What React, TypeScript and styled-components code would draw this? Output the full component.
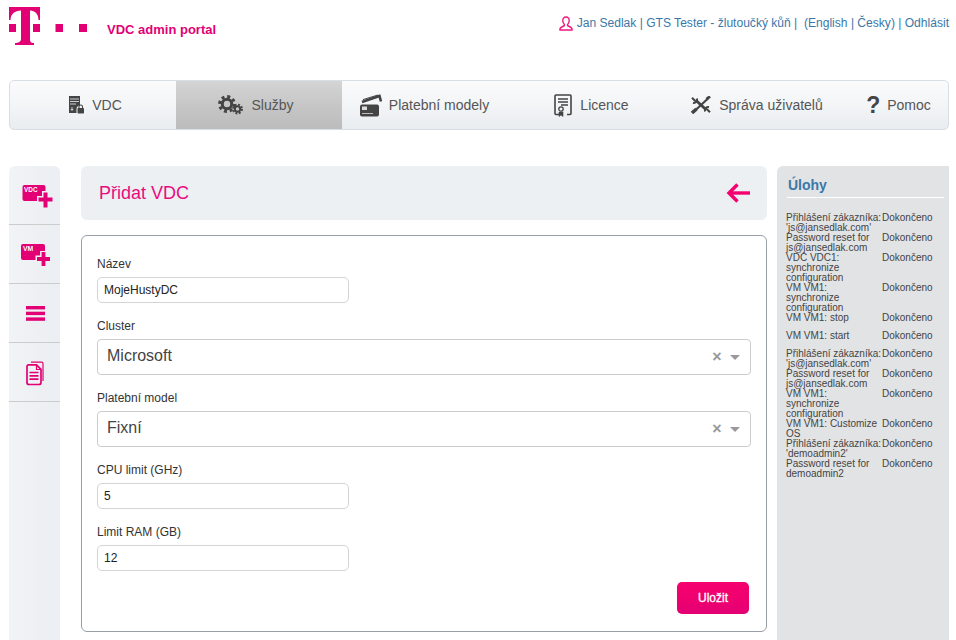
import React from "react";
import styled, { createGlobalStyle } from "styled-components";

const Global = createGlobalStyle`
  html, body { margin: 0; padding: 0; background: #fff; }
  body { font-family: "Liberation Sans", Arial, sans-serif; overflow: hidden; }
  #root { height: 640px; overflow: hidden; }
`;

const Page = styled.div`
  width: 956px;
  height: 640px;
  box-sizing: border-box;
  padding: 0 7px 0 9px;
  display: flex;
  flex-direction: column;
  overflow: hidden;
`;

const Header = styled.header`
  height: 80px;
  display: flex;
  align-items: flex-start;
  justify-content: space-between;
  flex: none;
`;

const Brand = styled.div`
  display: flex;
  align-items: flex-start;
  padding-top: 7px;
`;

const BrandName = styled.span`
  margin: 15px 0 0 18px;
  font-size: 13px;
  line-height: 15px;
  font-weight: 700;
  color: #e20074;
`;

const TopLinks = styled.div`
  display: flex;
  align-items: center;
  gap: 4px;
  margin-top: 15px;
  font-size: 12.07px;
  line-height: 16px;
  color: #3b78a8;
  white-space: pre;
`;

const Nav = styled.nav`
  flex: none;
  height: 50px;
  box-sizing: border-box;
  border: 1px solid #d7dee5;
  border-radius: 5px;
  display: grid;
  grid-template-columns: repeat(5, 166px) 1fr;
  overflow: hidden;
  background: linear-gradient(#fbfbfc, #f2f4f6 55%, #e9ecf0);
`;

const NavItem = styled.div<{ $active?: boolean; $left?: number; $right?: number; $gap?: number }>`
  display: flex;
  align-items: center;
  justify-content: center;
  gap: ${(p) => p.$gap ?? 8}px;
  padding: 0 ${(p) => p.$right ?? 0}px 0 ${(p) => p.$left ?? 0}px;
  font-size: 14px;
  color: #555;
  white-space: nowrap;
  background: ${(p) => (p.$active ? "linear-gradient(#d4d4d4, #c4c4c4 60%, #bcbcbc)" : "transparent")};
`;

const NavGlyph = styled.span`
  display: flex;
  color: #444;
`;

const QuestionGlyph = styled.span`
  font-size: 23px;
  line-height: 22px;
  font-weight: 700;
  color: #444;
`;

const Body = styled.div`
  flex: 1;
  min-height: 0;
  margin-top: 36px;
  display: flex;
  align-items: stretch;
`;

const Rail = styled.aside`
  width: 51px;
  margin-right: 21px;
  flex: none;
  background: linear-gradient(90deg, #f1f3f5, #ebeef2);
  border-radius: 6px 6px 0 0;
  display: flex;
  flex-direction: column;
`;

const RailItem = styled.div<{ $left?: number; $top?: number }>`
  height: 59px;
  box-sizing: border-box;
  padding: ${(p) => p.$top ?? 0}px 0 0 ${(p) => p.$left ?? 0}px;
  border-bottom: 1px solid #ccc;
  display: flex;
  align-items: center;
  justify-content: center;
  flex: none;
`;

const Main = styled.main`
  width: 686px;
  margin-right: 10px;
  flex: none;
  display: flex;
  flex-direction: column;
  gap: 15px;
`;

const TitleBar = styled.div`
  height: 54px;
  flex: none;
  box-sizing: border-box;
  padding: 0 17px 0 18px;
  background: #ecf0f3;
  border-radius: 6px;
  display: flex;
  align-items: center;
  justify-content: space-between;
`;

const Title = styled.h1`
  margin: 0;
  font-size: 18px;
  font-weight: 400;
  color: #ea0a7f;
`;

const Card = styled.form`
  height: 397px;
  box-sizing: border-box;
  border: 1px solid #999fa6;
  border-radius: 6px;
  padding: 21px 15px 0;
  display: flex;
  flex-direction: column;
`;

const Label = styled.label`
  display: block;
  font-size: 12px;
  line-height: 14px;
  color: #333;
  margin-bottom: 6px;
`;

const Field = styled.div`
  margin-bottom: 16px;
`;

const TextBox = styled.div`
  width: 252px;
  height: 26px;
  box-sizing: border-box;
  border: 1px solid #d4d4d4;
  border-radius: 5px;
  padding: 0 6px;
  display: flex;
  align-items: center;
  font-size: 12px;
  color: #222;
`;

const Select = styled.div`
  height: 36px;
  box-sizing: border-box;
  border: 1px solid #ccc;
  border-radius: 4px;
  padding: 0 10px 2px 9px;
  display: flex;
  align-items: center;
  font-size: 16px;
  color: #444;
`;

const SelectValue = styled.span`
  flex: 1;
`;

const Clear = styled.span`
  font-size: 16px;
  font-weight: 700;
  color: #999;
  width: 12px;
  text-align: center;
  margin-right: 7px;
  padding-top: 2px;
`;

const Caret = styled.span`
  width: 0;
  height: 0;
  margin-top: 2px;
  border-left: 5px solid transparent;
  border-right: 5px solid transparent;
  border-top: 5px solid #999;
`;

const Actions = styled.div`
  display: flex;
  justify-content: flex-end;
  padding-right: 2px;
  margin-top: -5px;
`;

const SaveButton = styled.button`
  width: 72px;
  height: 32px;
  border: 0;
  border-radius: 5px;
  background: linear-gradient(#f5006f 0%, #f0006f 50%, #e20074 100%);
  color: #fff;
  font: 400 12px "Liberation Sans", Arial, sans-serif;
  -webkit-text-stroke: 0.3px #fff;
`;

const Tasks = styled.aside`
  width: 172px;
  flex: none;
  box-sizing: border-box;
  background: #e2e3e5;
  border-radius: 6px 0 0 0;
  padding: 11px 5px 0 10px;
`;

const TasksTitle = styled.h2`
  margin: 0;
  font-size: 14px;
  line-height: 17px;
  font-weight: 700;
  color: #3b78a8;
  padding: 0 0 3px 1px;
  border-bottom: 1px solid #fff;
`;

const TaskList = styled.div`
  margin: 15px 0 0 -1px;
  font-size: 10px;
  line-height: 10px;
  color: #444;
`;

const TaskRow = styled.div`
  display: grid;
  grid-template-columns: 96px 1fr;
  min-height: 18px;
`;

const tasks = [
  "Přihlášení zákazníka: 'js@jansedlak.com'",
  "Password reset for js@jansedlak.com",
  "VDC VDC1: synchronize configuration",
  "VM VM1: synchronize configuration",
  "VM VM1: stop",
  "VM VM1: start",
  "Přihlášení zákazníka: 'js@jansedlak.com'",
  "Password reset for js@jansedlak.com",
  "VM VM1: synchronize configuration",
  "VM VM1: Customize OS",
  "Přihlášení zákazníka: 'demoadmin2'",
  "Password reset for demoadmin2",
];

const PINK = "#e20074";

const Logo = () => (
  <svg width="80" height="39" viewBox="0 0 80 39" fill={PINK}>
    <path d="M0 0H31V13H29.5C29.5 7 26 3.5 21 3.4V32C21 35 22 36 25 36V38H6V36C9 36 12 35 12 32V3.4C6 3.5 1.5 7 1.5 13H0Z" />
    <rect x="0" y="17" width="7" height="8" />
    <rect x="24" y="17" width="7" height="8" />
    <rect x="46.5" y="17" width="7.5" height="8" />
    <rect x="70" y="17" width="8" height="8" />
  </svg>
);

const UserIcon = () => (
  <svg width="14" height="15" viewBox="0 0 14 15" fill="none" stroke="#f0187f" strokeWidth="1.4">
    <path d="M7 1C4.8 1 3.6 2.8 3.8 5C4 6.6 4.7 7.8 5.4 8.5V9.6C4 10.6 1.6 11 1 12.6V14H13V12.6C12.4 11 10 10.6 8.6 9.6V8.5C9.3 7.8 10 6.6 10.2 5C10.4 2.8 9.2 1 7 1Z" />
  </svg>
);

const VdcNavIcon = () => (
  <svg width="15" height="18" viewBox="0 0 15 18" fill="#444">
    <path d="M0 0H11V9.5A4 4 0 0 0 7.5 13V17H0Z" />
    <g stroke="#eef0f3" strokeWidth="0.8">
      <path d="M1 3H10M1 5.5H10M1 8H7" />
    </g>
    <path d="M3 11V14M1.8 13L3 14.5L4.2 13" stroke="#eef0f3" fill="none" strokeWidth="0.8" />
    <rect x="8.5" y="12" width="6.5" height="5.5" rx="0.8" />
    <path d="M10 12.5V10.8A1.75 1.75 0 0 1 13.5 10.8V12.5" fill="none" stroke="#444" strokeWidth="1.1" />
  </svg>
);

const GearsNavIcon = () => (
  <svg width="25" height="20" viewBox="0 0 25 20" fill="none" stroke="#444">
    <circle cx="9" cy="9" r="4.7" strokeWidth="3" />
    <circle cx="9" cy="9" r="7.4" strokeWidth="3" strokeDasharray="3 2.81" />
    <circle cx="19.5" cy="14" r="2.7" strokeWidth="2" />
    <circle cx="19.5" cy="14" r="4.4" strokeWidth="2" strokeDasharray="1.9 1.56" />
  </svg>
);

const CardNavIcon = () => (
  <svg width="22" height="23" viewBox="0 0 22 23">
    <path d="M2 8L19.5 2L21 7.5" fill="none" stroke="#444" strokeWidth="2.6" />
    <path d="M3 5.6L18 1" fill="none" stroke="#444" strokeWidth="1" />
    <rect x="0" y="10.5" width="19" height="12" rx="2" fill="#444" />
    <rect x="2" y="12.5" width="5" height="3.5" fill="#ddd" />
    <path d="M2 19.5H13" stroke="#bbb" strokeWidth="1" />
  </svg>
);

const LicenceNavIcon = () => (
  <svg width="18" height="23" viewBox="0 0 18 23" fill="none" stroke="#444">
    <path d="M5 20.5H2A1 1 0 0 1 1 19.5V2A1 1 0 0 1 2 1H16A1 1 0 0 1 17 2V19.5A1 1 0 0 1 16 20.5H13" strokeWidth="1.6" />
    <path d="M4 5H14M4 8H14M7 11H14" strokeWidth="1.3" />
    <circle cx="7" cy="15" r="2.2" strokeWidth="1.3" />
    <path d="M5 18V22.5L7 21L9 22.5V18" fill="#444" strokeWidth="0.6" />
  </svg>
);

const ToolsNavIcon = () => (
  <svg width="20" height="18" viewBox="0 0 20 18" fill="none" stroke="#444">
    <path d="M4.5 4L15.5 14" strokeWidth="3" />
    <path d="M1 1.8L4 4.8M6 2.5A3.4 3.4 0 0 1 2 6.8" strokeWidth="2" />
    <path d="M19 16.2L16 13.2M14 15.5A3.4 3.4 0 0 1 18 11.2" strokeWidth="2" />
    <path d="M3 15.5L17 2.5" strokeWidth="2.2" />
    <path d="M1 17L5.5 13" strokeWidth="3.4" />
    <path d="M15.5 3.2L19 0.4" strokeWidth="2.8" />
  </svg>
);

const AddVdcIcon = () => (
  <svg width="31" height="23" viewBox="0 0 31 23">
    <rect x="0.5" y="0" width="23" height="16" rx="2" fill={PINK} />
    <text x="2" y="7" fontSize="6.4" fontWeight="700" fill="#fff" fontFamily="'Liberation Sans', Arial, sans-serif">VDC</text>
    <path d="M23.5 6V22.5M15 14.5H31" stroke="#eef0f3" strokeWidth="7" />
    <path d="M23.5 7.5V22.5M16.5 14.5H30.5" stroke={PINK} strokeWidth="4" />
  </svg>
);

const AddVmIcon = () => (
  <svg width="30" height="23" viewBox="0 0 30 23">
    <rect x="0" y="0" width="24" height="16" rx="2" fill={PINK} />
    <text x="2" y="7" fontSize="6.8" fontWeight="700" fill="#fff" fontFamily="'Liberation Sans', Arial, sans-serif">VM</text>
    <path d="M22.5 7V22M14.5 15H29" stroke="#eef0f3" strokeWidth="6.8" />
    <path d="M22.5 8V22M16 15H29" stroke={PINK} strokeWidth="3.8" />
  </svg>
);

const MenuIcon = () => (
  <svg width="19" height="15" viewBox="0 0 19 15" fill={PINK}>
    <rect width="19" height="3.4" />
    <rect y="5.7" width="19" height="3.4" />
    <rect y="11.4" width="19" height="3.4" />
  </svg>
);

const DocsIcon = () => (
  <svg width="18" height="25" viewBox="0 0 18 25" fill="none" stroke={PINK}>
    <path d="M5 1.2H15.5A1.5 1.5 0 0 1 17 2.7V20" strokeWidth="1.2" />
    <path d="M2.5 3.8H10.5L15 8.3V21.5A2 2 0 0 1 13 23.5H3A2 2 0 0 1 1 21.5V5.3A1.5 1.5 0 0 1 2.5 3.8Z" strokeWidth="1.7" />
    <path d="M10.5 4V8.5H15" strokeWidth="1.2" />
    <path d="M3.5 11.5H12.5M3.5 14.8H12.5M3.5 18.1H12.5" strokeWidth="1.7" />
  </svg>
);

const BackArrow = () => (
  <svg width="24" height="20" viewBox="0 0 24 20" fill="none" stroke="#f5006f" strokeWidth="3.4">
    <path d="M24 10H3" />
    <path d="M11.5 1.5L3 10L11.5 18.5" />
  </svg>
);

export default function App() {
  return (
    <Page>
      <Global />
      <Header>
        <Brand>
          <Logo />
          <BrandName>VDC admin portal</BrandName>
        </Brand>
        <TopLinks>
          <UserIcon />
          <span>Jan Sedlak | GTS Tester - žlutoučký kůň |  (English | Česky) | Odhlásit</span>
        </TopLinks>
      </Header>

      <Nav>
        <NavItem $left={5}><NavGlyph><VdcNavIcon /></NavGlyph>VDC</NavItem>
        <NavItem $active $right={6}><NavGlyph><GearsNavIcon /></NavGlyph>Služby</NavItem>
        <NavItem $right={1} $gap={7}><NavGlyph><CardNavIcon /></NavGlyph>Platební modely</NavItem>
        <NavItem $left={1}><NavGlyph><LicenceNavIcon /></NavGlyph>Licence</NavItem>
        <NavItem><NavGlyph><ToolsNavIcon /></NavGlyph>Správa uživatelů</NavItem>
        <NavItem $left={9} $gap={7}><QuestionGlyph>?</QuestionGlyph>Pomoc</NavItem>
      </Nav>

      <Body>
        <Rail>
          <RailItem $left={5} $top={3}><AddVdcIcon /></RailItem>
          <RailItem $left={2} $top={3}><AddVmIcon /></RailItem>
          <RailItem $left={2}><MenuIcon /></RailItem>
          <RailItem $top={2}><DocsIcon /></RailItem>
        </Rail>

        <Main>
          <TitleBar>
            <Title>Přidat VDC</Title>
            <BackArrow />
          </TitleBar>
          <Card>
            <Field>
              <Label>Název</Label>
              <TextBox>MojeHustyDC</TextBox>
            </Field>
            <Field>
              <Label>Cluster</Label>
              <Select>
                <SelectValue>Microsoft</SelectValue>
                <Clear>×</Clear>
                <Caret />
              </Select>
            </Field>
            <Field>
              <Label>Platební model</Label>
              <Select>
                <SelectValue>Fixní</SelectValue>
                <Clear>×</Clear>
                <Caret />
              </Select>
            </Field>
            <Field>
              <Label>CPU limit (GHz)</Label>
              <TextBox>5</TextBox>
            </Field>
            <Field>
              <Label>Limit RAM (GB)</Label>
              <TextBox>12</TextBox>
            </Field>
            <Actions>
              <SaveButton type="button">Uložit</SaveButton>
            </Actions>
          </Card>
        </Main>

        <Tasks>
          <TasksTitle>Úlohy</TasksTitle>
          <TaskList>
            {tasks.map((name, i) => (
              <TaskRow key={i}>
                <span>{name}</span>
                <span>Dokončeno</span>
              </TaskRow>
            ))}
          </TaskList>
        </Tasks>
      </Body>
    </Page>
  );
}
